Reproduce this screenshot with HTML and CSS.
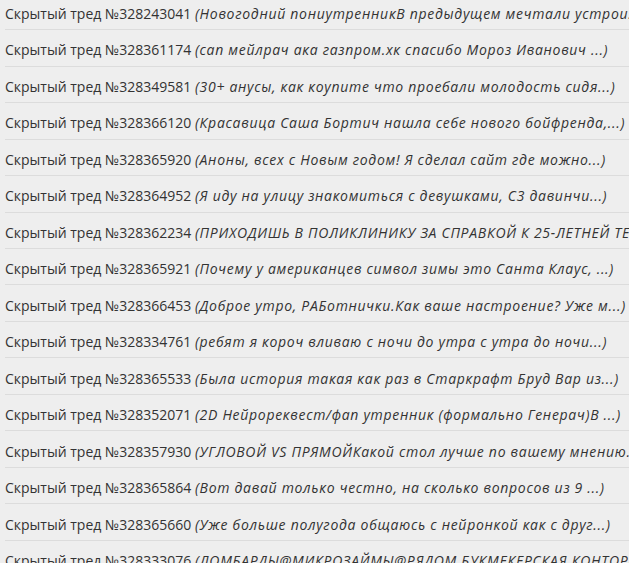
FILE: index.html
```html
<!DOCTYPE html>
<html lang="ru">
<head>
<meta charset="utf-8">
<link rel="stylesheet" href="styles.css">
</head>
<body>
<div class="list">
  <div class="row">Скрытый тред №328243041 <em>(Новогодний пониутренникВ предыдущем мечтали устрои...)</em></div>
  <div class="row">Скрытый тред №328361174 <em>(сап мейлрач ака газпром.хк спасибо Мороз Иванович ...)</em></div>
  <div class="row">Скрытый тред №328349581 <em>(30+ анусы, как коупите что проебали молодость сидя...)</em></div>
  <div class="row">Скрытый тред №328366120 <em>(Красавица Саша Бортич нашла себе нового бойфренда,...)</em></div>
  <div class="row">Скрытый тред №328365920 <em>(Аноны, всех с Новым годом! Я сделал сайт где можно...)</em></div>
  <div class="row">Скрытый тред №328364952 <em>(Я иду на улицу знакомиться с девушками, С3 давинчи...)</em></div>
  <div class="row">Скрытый тред №328362234 <em>(ПРИХОДИШЬ В ПОЛИКЛИНИКУ ЗА СПРАВКОЙ К 25-ЛЕТНЕЙ ТЕ...)</em></div>
  <div class="row">Скрытый тред №328365921 <em>(Почему у американцев символ зимы это Санта Клаус, ...)</em></div>
  <div class="row">Скрытый тред №328366453 <em>(Доброе утро, РАБотнички.Как ваше настроение? Уже м...)</em></div>
  <div class="row">Скрытый тред №328334761 <em>(ребят я короч вливаю с ночи до утра с утра до ночи...)</em></div>
  <div class="row">Скрытый тред №328365533 <em>(Была история такая как раз в Старкрафт Бруд Вар из...)</em></div>
  <div class="row">Скрытый тред №328352071 <em>(2D Нейрореквест/фап утренник (формально Генерач)В ...)</em></div>
  <div class="row">Скрытый тред №328357930 <em>(УГЛОВОЙ VS ПРЯМОЙКакой стол лучше по вашему мнению...)</em></div>
  <div class="row">Скрытый тред №328365864 <em>(Вот давай только честно, на сколько вопросов из 9 ...)</em></div>
  <div class="row">Скрытый тред №328365660 <em>(Уже больше полугода общаюсь с нейронкой как с друг...)</em></div>
  <div class="row">Скрытый тред №328333076 <em>(ЛОМБАРДЫ@МИКРОЗАЙМЫ@РЯДОМ БУКМЕКЕРСКАЯ КОНТОРА...)</em></div>
</div>
</body>
</html>
```
FILE: styles.css
```css
html, body {
  margin: 0;
  padding: 0;
  background: #eeeeee;
  overflow: hidden;
}
.list {
  margin-top: -6.4px;
  padding-left: 5px;
}
.row {
  font-family: "Open Sans", sans-serif;
  font-size: 14px;
  line-height: 20px;
  color: #333333;
  padding-top: 10.4px;
  padding-bottom: 5.1px;
  border-bottom: 1px solid #dcdcdc;
  white-space: nowrap;
  overflow: hidden;
}
.row em {
  font-style: italic;
  letter-spacing: 0.7px;
}
```
